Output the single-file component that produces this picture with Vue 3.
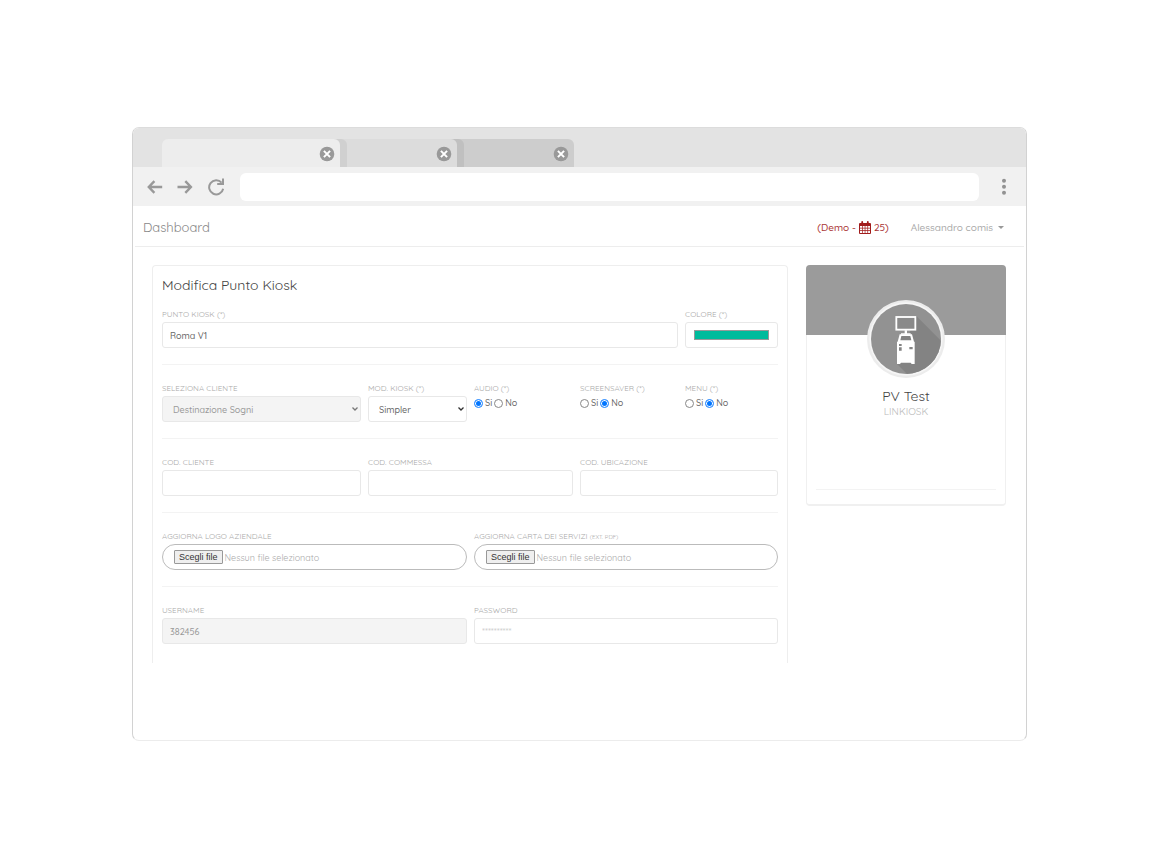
<template>
  <div class="page">
    <div class="browser">
      <!-- Tabs -->
      <div class="tab-bar">
        <div v-for="tab in tabs" :key="tab" class="tab" :class="'tab-' + tab">
          <button type="button" class="tab-close" aria-label="Chiudi scheda">
            <svg viewBox="0 0 16 16" width="16" height="16">
              <circle cx="8" cy="8" r="7.3" fill="#999" />
              <path d="M4.9 4.9l6.2 6.2M11.1 4.9l-6.2 6.2" stroke="#fff" stroke-width="2" />
            </svg>
          </button>
        </div>
      </div>

      <!-- Toolbar -->
      <div class="toolbar">
        <button type="button" class="tool" aria-label="Indietro">
          <svg viewBox="0 0 16 16" width="16" height="16">
            <path d="M15.2 8H2M7.4 2.2L1.8 8l5.6 5.8" />
          </svg>
        </button>
        <button type="button" class="tool" aria-label="Avanti">
          <svg viewBox="0 0 16 16" width="16" height="16">
            <path d="M.5 8H13.7M8.3 2.2L13.9 8l-5.6 5.8" />
          </svg>
        </button>
        <button type="button" class="tool reload" aria-label="Ricarica">
          <svg viewBox="0 0 18 18" width="18" height="18">
            <path class="thin" d="M14.6 4.6A7.1 7.1 0 1 0 16.2 10.8" />
            <path class="thin" d="M16 .6V6H10.2" />
          </svg>
        </button>
        <input v-model="url" class="url" type="text" aria-label="Indirizzo">
        <button type="button" class="tool more" aria-label="Menu">
          <svg viewBox="0 0 6 18" width="6" height="18">
            <circle cx="3" cy="2.8" r="2" />
            <circle cx="3" cy="8.8" r="2" />
            <circle cx="3" cy="14.8" r="2" />
          </svg>
        </button>
      </div>

      <nav class="navbar">
        <a href="#" class="brand">Dashboard</a>
        <a href="#" class="demo">
          (Demo -
          <svg viewBox="0 0 12 13" width="12" height="13">
            <path fill="#a11c1c" fill-rule="evenodd" d="M1 2h10a1 1 0 0 1 1 1v9a1 1 0 0 1-1 1H1a1 1 0 0 1-1-1V3a1 1 0 0 1 1-1zM1 5v1.8h2V5zM3.7 5v1.8h2V5zM6.4 5v1.8h2V5zM9.1 5v1.8H11V5zM1 7.5v1.8h2V7.5zM3.7 7.5v1.8h2V7.5zM6.4 7.5v1.8h2V7.5zM9.1 7.5v1.8H11V7.5zM1 10v2h2v-2zM3.7 10v2h2v-2zM6.4 10v2h2v-2zM9.1 10v2H11v-2z" />
            <path stroke="#a11c1c" stroke-width="1.8" stroke-linecap="round" d="M3.2 1v2M8.8 1v2" />
          </svg>
          25)
        </a>
        <button type="button" class="user">Alessandro comis <i class="caret"></i></button>
      </nav>

      <main class="content">
        <form class="card" @submit.prevent>
          <h4 class="title">Modifica Punto Kiosk</h4>

          <div class="row row-name">
            <div class="field">
              <label for="punto">Punto Kiosk (*)</label>
              <input id="punto" v-model="form.punto" class="control" type="text">
            </div>
            <div class="field">
              <label for="colore">Colore (*)</label>
              <input id="colore" v-model="form.colore" class="control color" type="color">
            </div>
          </div>

          <div class="row row-options">
            <div class="field">
              <label for="cliente">Seleziona Cliente</label>
              <div class="select">
                <select id="cliente" v-model="form.cliente" class="control" disabled>
                  <option>Destinazione Sogni</option>
                </select>
                <svg viewBox="0 0 6 4" width="6" height="4"><path d="M.5.5L3 3 5.5.5" /></svg>
              </div>
            </div>
            <div class="field">
              <label for="modello">Mod. Kiosk (*)</label>
              <div class="select">
                <select id="modello" v-model="form.modello" class="control">
                  <option>Simpler</option>
                </select>
                <svg viewBox="0 0 6 4" width="6" height="4"><path d="M.5.5L3 3 5.5.5" /></svg>
              </div>
            </div>
            <fieldset v-for="r in radios" :key="r.key" class="field">
              <legend>{{ r.label }}</legend>
              <div class="radios">
                <label v-for="opt in ['Si', 'No']" :key="opt" class="radio">
                  <input v-model="form[r.key]" type="radio" :name="r.key" :value="opt">{{ opt }}
                </label>
              </div>
            </fieldset>
          </div>

          <div class="row row-codes">
            <div v-for="c in codes" :key="c.key" class="field">
              <label :for="c.key">{{ c.label }}</label>
              <input :id="c.key" v-model="form[c.key]" class="control" type="text">
            </div>
          </div>

          <div class="row row-half">
            <div v-for="(f, i) in files" :key="f.key" class="field">
              <label :for="f.key">{{ f.label }} <small v-if="f.note">{{ f.note }}</small></label>
              <div class="file">
                <button type="button" @click="pickFile(i)">Scegli file</button>
                <span>{{ f.name || 'Nessun file selezionato' }}</span>
                <input :id="f.key" ref="fileInputs" type="file" @change="f.name = $event.target.files[0]?.name">
              </div>
            </div>
          </div>

          <div class="row row-half">
            <div class="field">
              <label for="username">Username</label>
              <input id="username" v-model="form.username" class="control" type="text" disabled>
            </div>
            <div class="field">
              <label for="password">Password</label>
              <input id="password" v-model="form.password" class="control" type="password" placeholder="**********">
            </div>
          </div>
        </form>

        <aside class="profile">
          <div class="cover"></div>
          <svg class="avatar" viewBox="17 15 234 234" width="78" height="78">
            <defs>
              <clipPath id="disc"><circle cx="134" cy="132" r="105" /></clipPath>
            </defs>
            <circle cx="134" cy="132" r="117" fill="#ececec" />
            <circle cx="134" cy="132" r="110" fill="#f6f6f6" />
            <circle cx="134" cy="132" r="105" fill="#929292" />
            <path clip-path="url(#disc)" fill="#838383" d="M165 63L275 173 175 275 107 207z" />
            <!-- kiosk: screen, neck, body -->
            <rect x="105" y="66" width="57" height="38" fill="#8a8a8a" stroke="#fff" stroke-width="5.5" />
            <path fill="#fff" d="M130 106h7v9h11v4h-29v-4h11z" />
            <path fill="#fff" d="M115 118h37l6 22h2v67h-9l-3-4h-29l-3 4h-9v-67h2z" />
            <path fill="#838383" d="M120 123h27l3 13h-33zM113 147h8v6h-8zM113 157h8v10h-8zM144 156h10v7h-10z" />
          </svg>
          <h4 class="profile-name">PV Test</h4>
          <p class="profile-org">LINKIOSK</p>
          <hr>
        </aside>
      </main>
    </div>
  </div>
</template>

<script setup>
import { reactive, ref } from 'vue'

const tabs = [1, 2, 3]
const url = ref('')

const form = reactive({
  punto: 'Roma V1',
  colore: '#00bb9c',
  cliente: 'Destinazione Sogni',
  modello: 'Simpler',
  audio: 'Si',
  screensaver: 'No',
  menu: 'No',
  codCliente: '',
  codCommessa: '',
  codUbicazione: '',
  username: '382456',
  password: ''
})

const radios = [
  { key: 'audio', label: 'Audio (*)' },
  { key: 'screensaver', label: 'Screensaver (*)' },
  { key: 'menu', label: 'Menu (*)' }
]

const codes = [
  { key: 'codCliente', label: 'Cod. Cliente' },
  { key: 'codCommessa', label: 'Cod. Commessa' },
  { key: 'codUbicazione', label: 'Cod. Ubicazione' }
]

const files = reactive([
  { key: 'logo', label: 'Aggiorna Logo Aziendale', note: '', name: '' },
  { key: 'carta', label: 'Aggiorna Carta dei Servizi', note: '(ext. pdf)', name: '' }
])

const fileInputs = ref([])
const pickFile = (i) => fileInputs.value[i].click()
</script>

<style>
body {
  background: #fff;
}
</style>

<style scoped>
* {
  box-sizing: border-box;
}

.page {
  padding: 127px 133px 113px 132px;
  font-family: Quicksand, Lato, "Liberation Sans", sans-serif;
  color: #666;
}

button,
input,
select {
  font-family: inherit;
}

button {
  border: 0;
  padding: 0;
  background: none;
}

a {
  text-decoration: none;
}

.browser {
  min-height: 614px;
  border: 1px solid #d2d2d2;
  border-top-color: #dcdcdc;
  border-bottom-color: #ececec;
  border-radius: 7px;
  overflow: hidden;
}

/* Tabs */
.tab-bar {
  display: flex;
  height: 39px;
  padding: 11px 0 0 29px;
  background: #e3e3e3;
}

.tab {
  position: relative;
  display: flex;
  align-items: center;
  justify-content: flex-end;
  width: 125px;
  padding: 2px 5px 0 0;
  border-radius: 6px 6px 0 0;
}

.tab-1 {
  z-index: 3;
  width: 178px;
  background: #ededed;
  box-shadow: 7px 0 0 #d0d0d0;
}

.tab-2 {
  z-index: 2;
  margin-left: -8px;
  background: #dcdcdc;
  box-shadow: 7px 0 0 #c0c0c0;
}

.tab-3 {
  margin-left: -8px;
  background: #cdcdcd;
}

.tab-close {
  height: 16px;
}

svg {
  display: block;
}

/* Toolbar */
.toolbar {
  display: flex;
  align-items: center;
  height: 39px;
  padding: 0 19px 0 14px;
  background: #f1f1f1;
}

.tool {
  margin-right: 14px;
}

.tool path {
  fill: none;
  stroke: #999;
  stroke-width: 2.4;
}

.tool .thin {
  stroke-width: 2;
}

.tool circle {
  fill: #929292;
}

.reload {
  margin-right: 15px;
}

.url {
  flex: 1;
  min-width: 0;
  height: 28px;
  border: 0;
  border-radius: 6px;
  background: #fff;
}

.more {
  margin: 0 0 0 22px;
}

.navbar {
  display: flex;
  align-items: center;
  height: 41px;
  margin: 0 2px;
  padding: 2px 20px 0 8px;
  border-bottom: 1px solid #ededed;
}

.brand {
  flex: 1;
  color: #888;
  font-size: 13px;
}

.demo {
  display: flex;
  gap: 3px;
  align-items: center;
  margin-right: 22px;
  color: #a33;
  font-size: 10px;
  font-weight: 500;
}

.user {
  display: flex;
  gap: 5px;
  align-items: center;
  color: #aaa;
  font-size: 10px;
  font-weight: 500;
}

.caret {
  border: 3px solid transparent;
  border-top-color: #999;
  border-bottom: 0;
}

/* Content */
.content {
  display: grid;
  grid-template-columns: 636fr 200fr;
  gap: 18px;
  align-items: start;
  padding: 18px 20px 0 19px;
}

.card {
  padding: 9px 9px 19px;
  border: 1px solid #eee;
  border-bottom: 0;
  border-radius: 4px 4px 0 0;
}

.title {
  margin: 0 0 13px;
  color: #444;
  font-size: 14px;
  font-weight: 400;
  line-height: 20px;
}

.row {
  display: grid;
  gap: 7px;
}

.row + .row {
  margin-top: 16px;
  padding-top: 17px;
  border-top: 1px solid #f3f3f3;
}

.row-name {
  grid-template-columns: 516fr 93fr;
}

.row-options {
  grid-template-columns: 199fr 99fr 99fr 98fr 93fr;
}

.row-codes {
  grid-template-columns: 199fr 205fr 198fr;
}

.row-half {
  grid-template-columns: 305fr 304fr;
}

.field {
  min-width: 0;
  margin: 0;
  padding: 0;
  border: 0;
}

.field > label,
legend {
  display: block;
  margin-bottom: 2px;
  padding: 0;
  color: #aaa;
  font-size: 8px;
  line-height: 12px;
  text-transform: uppercase;
}

small {
  font-size: 6px;
  line-height: 1;
}

.control {
  display: block;
  width: 100%;
  height: 26px;
  padding: 0 7px;
  border: 1px solid #e8e8e8;
  border-radius: 3px;
  background: #fff;
  color: #666;
  font-size: 9px;
  font-weight: 500;
}

.control:disabled {
  background: #f4f4f4;
  color: #999;
  opacity: 1;
}

.control::placeholder {
  color: #ccc;
}

.color {
  padding: 7px 8px;
}

.color::-webkit-color-swatch-wrapper {
  padding: 0;
}

.color::-webkit-color-swatch {
  border: 1px solid #999;
  border-radius: 0;
}

.select {
  position: relative;
}

.select select {
  appearance: none;
  padding: 0 10px;
}

.select svg {
  position: absolute;
  top: 11px;
  right: 3px;
  pointer-events: none;
}

.select path {
  fill: none;
  stroke: #333;
  stroke-width: 1.3;
}

.select select:disabled + svg path {
  stroke: #777;
}

.radios {
  display: flex;
  gap: 2px;
}

.radio {
  display: flex;
  gap: 2px;
  align-items: center;
  color: #666;
  font-size: 9px;
  font-weight: 500;
  line-height: 14px;
}

.radio input {
  appearance: none;
  width: 9px;
  height: 9px;
  margin: 0;
  border: 1px solid #888;
  border-radius: 50%;
}

.radio input:checked {
  border-color: #3d95ff;
  background: #0075ff;
  box-shadow: inset 0 0 0 1px #fff;
}

.file {
  position: relative;
  display: flex;
  gap: 2px;
  align-items: center;
  height: 26px;
  padding: 0 11px;
  border: 1px solid #bbb;
  border-radius: 13px;
  color: #aaa;
  font-size: 9px;
}

.file button {
  height: 14px;
  padding: 0 4px;
  border: 1px solid #999;
  border-radius: 1px;
  background: #efefef;
  color: #333;
  font-family: "Liberation Sans", Arial, sans-serif;
  font-size: 9px;
  line-height: 12px;
}

.file input {
  position: absolute;
  width: 1px;
  height: 1px;
  opacity: 0;
  pointer-events: none;
}

/* Profile */
.profile {
  min-height: 241px;
  border: 1px solid #f0f0f0;
  border-bottom-width: 2px;
  border-radius: 4px;
  text-align: center;
}

.cover {
  height: 70px;
  margin: -1px -1px 0;
  border-radius: 4px 4px 0 0;
  background: #9b9b9b;
}

.avatar {
  position: relative;
  margin: -35px auto 0;
}

.profile-name {
  margin: 8px 0 0;
  color: #444;
  font-size: 14px;
  font-weight: 400;
  line-height: 20px;
}

.profile-org {
  margin: 0;
  color: #bbb;
  font-size: 10px;
  line-height: 12px;
}

.profile hr {
  margin: 71px 9px 0;
  border: 0;
  border-top: 1px solid #f3f3f3;
}
</style>
